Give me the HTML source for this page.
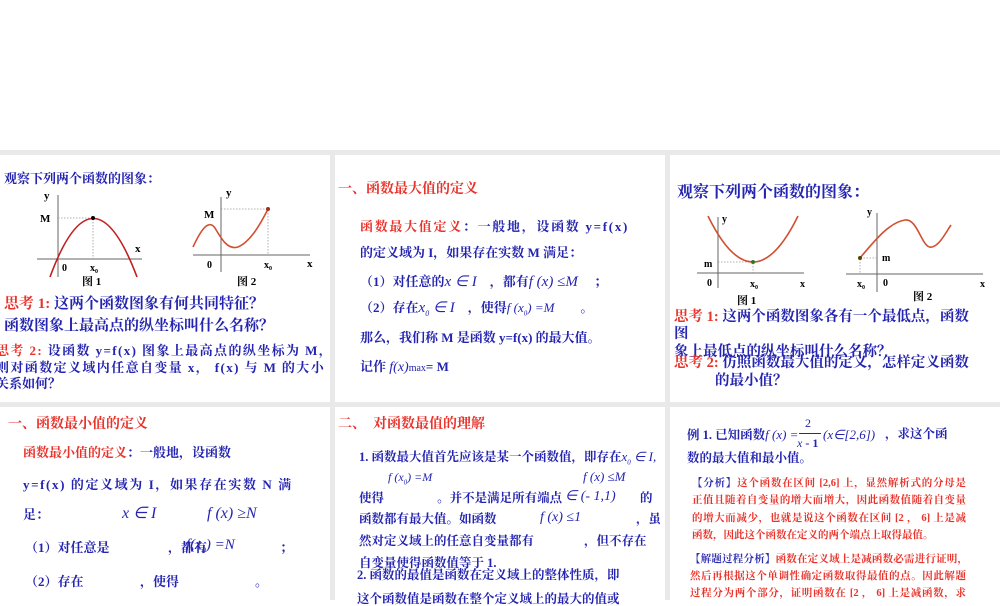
<!DOCTYPE html>
<html><head><meta charset="utf-8"><style>
body{margin:0;width:1000px;height:600px;background:#fff;position:relative;overflow:hidden;font-family:"Liberation Serif","Noto Serif CJK SC",serif;font-weight:bold}
.bg{position:absolute;left:0;top:150px;width:1000px;height:450px;background:#e9e9e9}
.p{position:absolute;background:#fff;overflow:hidden}
.t{position:absolute;white-space:nowrap;line-height:1;color:#2424b0}
.r{color:#e8332b}
.j{text-align:justify;text-align-last:justify;white-space:normal}
i{font-family:"Liberation Serif",serif;font-weight:normal}
svg{position:absolute;left:0;top:0}
</style></head><body>
<div class="bg"></div>
<div class="p" style="left:0;top:155px;width:330px;height:247px"></div>
<div class="p" style="left:335px;top:155px;width:330px;height:247px"></div>
<div class="p" style="left:670px;top:155px;width:330px;height:247px"></div>
<div class="p" style="left:0;top:407px;width:330px;height:193px"></div>
<div class="p" style="left:335px;top:407px;width:330px;height:193px"></div>
<div class="p" style="left:670px;top:407px;width:330px;height:193px"></div>

<svg width="1000" height="600" font-family="Liberation Serif" font-weight="bold" font-size="10">
<g stroke="#666" stroke-width="1" fill="none">
<line x1="37" y1="259" x2="142" y2="259"/><line x1="58" y1="277" x2="58" y2="195"/>
<line x1="193" y1="255" x2="310" y2="255"/><line x1="221" y1="272" x2="221" y2="197"/>
<line x1="697" y1="273" x2="804" y2="273"/><line x1="718" y1="288" x2="718" y2="217"/>
<line x1="846" y1="274" x2="983" y2="274"/><line x1="877" y1="292" x2="877" y2="213"/>
</g>
<g stroke="#999" stroke-dasharray="1.5,1.5" fill="none" stroke-width="0.8">
<polyline points="58,218 93,218 93,259"/>
<polyline points="221,209 268,209 268,255"/>
<polyline points="718,262 753,262 753,273"/>
<polyline points="877,258 860,258 860,274"/>
</g>
<g fill="none" stroke-width="1.6">
<path d="M50,277 Q93,160 137,277" stroke="#c02020"/>
<path d="M193,247 C200,232 208,218 215,228 C222,240 228,250 238,247 C250,242 260,225 268,209" stroke="#d05030"/>
<path d="M708,216 Q753,308 798,216" stroke="#d05030"/>
<path d="M860,258 C875,240 890,222 905,220 C918,218 922,250 932,247 C940,245 946,232 951,225" stroke="#d05030"/>
</g>
<circle cx="93" cy="218" r="2" fill="#000"/><circle cx="268" cy="209" r="2" fill="#a03020"/>
<circle cx="753" cy="262" r="2" fill="#2a7a2a"/><circle cx="860" cy="258" r="2" fill="#554400"/>
<g fill="#000">
<text x="44" y="199" font-size="11">y</text><text x="40" y="222" font-size="11">M</text><text x="135" y="252" font-size="11">x</text><text x="62" y="271">0</text><text x="90" y="271">x<tspan font-size="6" dy="2">0</tspan></text>
<text x="226" y="196" font-size="11">y</text><text x="204" y="218" font-size="11">M</text><text x="307" y="267" font-size="11">x</text><text x="207" y="268">0</text><text x="264" y="268">x<tspan font-size="6" dy="2">0</tspan></text>
<text x="722" y="222">y</text><text x="704" y="267">m</text><text x="800" y="287">x</text><text x="707" y="286">0</text><text x="750" y="287">x<tspan font-size="6" dy="2">0</tspan></text>
<text x="867" y="215">y</text><text x="882" y="261">m</text><text x="980" y="287">x</text><text x="883" y="286">0</text><text x="857" y="287">x<tspan font-size="6" dy="2">0</tspan></text>
</g>
</svg>
<div class="t" style="left:82px;top:277px;font-size:11px;color:#000">图 1</div>
<div class="t" style="left:237px;top:277px;font-size:11px;color:#000">图 2</div>
<div class="t" style="left:737px;top:296px;font-size:11px;color:#000">图 1</div>
<div class="t" style="left:913px;top:292px;font-size:11px;color:#000">图 2</div>

<!-- panel 1 -->
<div class="t" style="left:4px;top:172px;font-size:13px">观察下列两个函数的图象：</div>
<div class="t" style="left:4px;top:297px;font-size:15px"><span class="r">思考 1:</span> 这两个函数图象有何共同特征？</div>
<div class="t" style="left:4px;top:319px;font-size:15px">函数图象上最高点的纵坐标叫什么名称？</div>
<div class="t" style="left:-4px;top:344px;font-size:13px;letter-spacing:1.4px"><span class="r">思考 2:</span> 设函数 y=f(x) 图象上最高点的纵坐标为 M，</div>
<div class="t" style="left:-4px;top:361px;font-size:13px;letter-spacing:1.4px">则对函数定义域内任意自变量 x， f(x) 与 M 的大小</div>
<div class="t" style="left:-4px;top:377px;font-size:13px">关系如何？</div>

<!-- panel 2 -->
<div class="t r" style="left:338px;top:183px;font-size:14px">一、函数最大值的定义</div>
<div class="t" style="left:360px;top:220px;font-size:13px;letter-spacing:1.7px"><span class="r">函数最大值定义</span>：一般地，设函数 y=f(x)</div>
<div class="t" style="left:360px;top:246px;font-size:13px">的定义域为 I，如果存在实数 M 满足：</div>
<div class="t" style="left:360px;top:275px;font-size:13px">（1）对任意的<i style="font-size:15px">x ∈ I</i>　，都有<i style="font-size:15px">f (x) ≤M</i>　 ；</div>
<div class="t" style="left:360px;top:301px;font-size:13px">（2）存在<i style="font-size:15px">x<sub style="font-size:8px">0</sub> ∈ I</i>　，使得<i style="font-size:13px">f (x<sub style="font-size:7px">0</sub>) =M</i>　　。</div>
<div class="t" style="left:360px;top:331px;font-size:13px">那么，我们称 M 是函数 y=f(x) 的最大值。</div>
<div class="t" style="left:360px;top:360px;font-size:13px">记作 <i style="font-size:14px">f(x)</i><span style="font-size:10px;font-weight:normal">max</span>= M</div>

<!-- panel 3 -->
<div class="t" style="left:677px;top:185px;font-size:16px">观察下列两个函数的图象：</div>
<div class="t" style="left:674px;top:310px;font-size:14.5px"><span class="r">思考 1:</span> 这两个函数图象各有一个最低点，函数</div>
<div class="t" style="left:674px;top:327px;font-size:14.5px">图</div>
<div class="t" style="left:674px;top:345px;font-size:14.5px">象上最低点的纵坐标叫什么名称？</div>
<div class="t" style="left:674px;top:356px;font-size:14.5px"><span class="r">思考 2:</span> 仿照函数最大值的定义，怎样定义函数</div>
<div class="t" style="left:715px;top:374px;font-size:14.5px">的最小值？</div>

<!-- panel 4 -->
<div class="t r" style="left:8px;top:418px;font-size:14px">一、函数最小值的定义</div>
<div class="t" style="left:23px;top:446px;font-size:13px"><span class="r">函数最小值的定义</span>：一般地，设函数</div>
<div class="t" style="left:23px;top:478px;font-size:13px;letter-spacing:1.6px">y=f(x) 的定义域为 I，如果存在实数 N 满</div>
<div class="t" style="left:23px;top:508px;font-size:13px">足：</div>
<div class="t" style="left:122px;top:506px;font-size:16px"><i>x ∈ I</i></div>
<div class="t" style="left:207px;top:506px;font-size:16px"><i>f (x) ≥N</i></div>
<div class="t" style="left:25px;top:541px;font-size:13px">（1）对任意是</div>
<div class="t" style="left:168px;top:541px;font-size:13px">，都有</div>
<div class="t" style="left:186px;top:538px;font-size:15px"><i>f(x<sub style="font-size:8px">0</sub>) =N</i></div>
<div class="t" style="left:280px;top:541px;font-size:13px">；</div>
<div class="t" style="left:25px;top:575px;font-size:13px">（2）存在</div>
<div class="t" style="left:140px;top:575px;font-size:13px">，使得</div>
<div class="t" style="left:255px;top:575px;font-size:13px">。</div>

<!-- panel 5 -->
<div class="t r" style="left:338px;top:418px;font-size:14px">二、　对函数最值的理解</div>
<div class="t" style="left:359px;top:450px;font-size:12.5px">1. 函数最大值首先应该是某一个函数值，即存在<i style="font-size:13px">x<sub style="font-size:7px">0</sub> ∈ I,</i></div>
<div class="t" style="left:388px;top:471px;font-size:12px"><i>f (x<sub style="font-size:7px">0</sub>) =M</i></div>
<div class="t" style="left:583px;top:470px;font-size:13px"><i>f (x) ≤M</i></div>
<div class="t" style="left:359px;top:492px;font-size:12.5px">使得　　　　 。并不是满足所有端点</div>
<div class="t" style="left:565px;top:490px;font-size:14px"><i>∈ (- 1,1)</i></div>
<div class="t" style="left:640px;top:492px;font-size:12.5px">的</div>
<div class="t" style="left:359px;top:513px;font-size:12.5px">函数都有最大值。如函数</div>
<div class="t" style="left:540px;top:511px;font-size:14px"><i>f (x) ≤1</i></div>
<div class="t" style="left:636px;top:513px;font-size:12.5px">，虽</div>
<div class="t" style="left:359px;top:535px;font-size:12.5px">然对定义域上的任意自变量都有　　　　，但不存在</div>
<div class="t" style="left:359px;top:557px;font-size:12.5px">自变量使得函数值等于 1.</div>
<div class="t" style="left:357px;top:569px;font-size:12.5px">2. 函数的最值是函数在定义域上的整体性质，即</div>
<div class="t" style="left:357px;top:593px;font-size:12.5px">这个函数值是函数在整个定义域上的最大的值或</div>

<!-- panel 6 -->
<div class="t" style="left:687px;top:428px;font-size:12.5px">例 1. 已知函数<i style="font-size:13px">f (x) =</i></div>
<div class="t" style="left:805px;top:417px;font-size:12px;font-weight:normal">2</div>
<div style="position:absolute;left:799px;top:433px;width:22px;height:1px;background:#2424b0"></div>
<div class="t" style="left:797px;top:437px;font-size:12px"><i>x</i> - 1</div>
<div class="t" style="left:823px;top:428px;font-size:13px"><i>(x∈[2,6])</i></div>
<div class="t" style="left:885px;top:428px;font-size:12.5px">，求这个函</div>
<div class="t" style="left:687px;top:452px;font-size:12.5px">数的最大值和最小值。</div>
<div class="t r j" style="left:692px;top:479px;width:274px;font-size:10.5px"><span style="color:#3030b0">【分析】</span>这个函数在区间 [2,6] 上，显然解析式的分母是</div>
<div class="t r j" style="left:692px;top:496px;width:274px;font-size:10.5px">正值且随着自变量的增大而增大，因此函数值随着自变量</div>
<div class="t r j" style="left:692px;top:514px;width:274px;font-size:10.5px">的增大而减少，也就是说这个函数在区间 [2 ， 6] 上是减</div>
<div class="t r" style="left:692px;top:531px;font-size:10.5px">函数，因此这个函数在定义的两个端点上取得最值。</div>
<div class="t r j" style="left:690px;top:555px;width:278px;font-size:10.5px"><span style="color:#3030b0">【解题过程分析】</span>函数在定义域上是减函数必需进行证明，</div>
<div class="t r j" style="left:690px;top:572px;width:276px;font-size:10.5px">然后再根据这个单调性确定函数取得最值的点。因此解题</div>
<div class="t r j" style="left:690px;top:589px;width:276px;font-size:10.5px">过程分为两个部分，证明函数在 [2 ， 6] 上是减函数，求</div>
</body></html>
